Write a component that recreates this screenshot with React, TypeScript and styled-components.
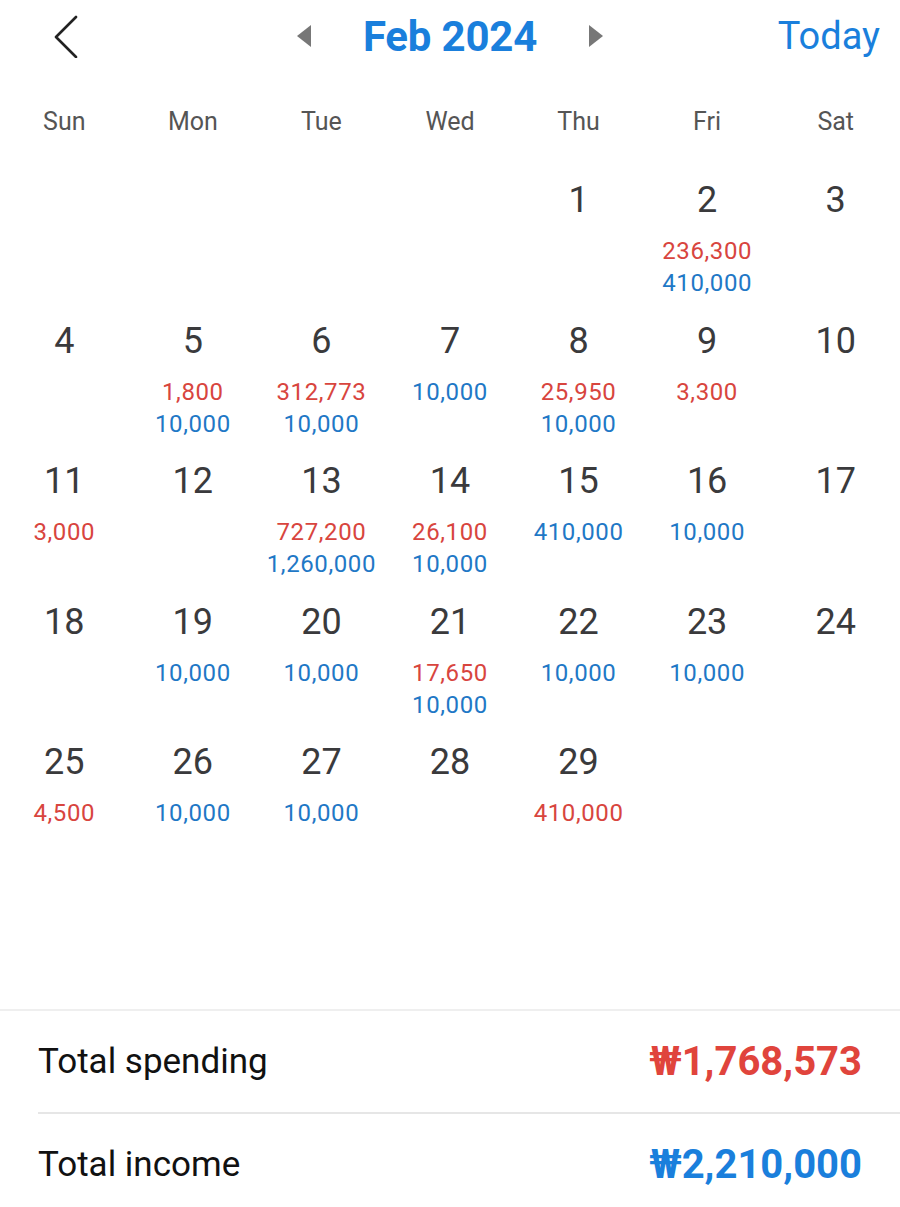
import React from 'react';
import styled, { createGlobalStyle } from 'styled-components';

const GlobalStyle = createGlobalStyle`
  html, body {
    margin: 0;
    padding: 0;
    background: #fff;
    overflow: hidden;
  }
  body {
    font-family: Roboto, "Noto Sans", "Liberation Sans", sans-serif;
  }
`;

const Page = styled.div`
  width: 900px;
  height: 1215px;
  display: flex;
  flex-direction: column;
`;

const TopBar = styled.div`
  height: 72px;
  display: grid;
  grid-template-columns: 200px 1fr 200px;
  align-items: center;
`;

const BackButton = styled.div`
  display: flex;
  align-items: center;
  padding-left: 52px;
`;

const MonthNav = styled.div`
  display: flex;
  align-items: center;
  justify-content: center;
  gap: 51px;
`;

const MonthTitle = styled.div`
  font-size: 42px;
  font-weight: 700;
  color: #1a7fdc;
  letter-spacing: -0.2px;
`;

const TodayLink = styled.div`
  font-size: 38px;
  color: #1a7fdc;
  text-align: right;
  padding-right: 20px;
`;

const WeekHeader = styled.div`
  display: grid;
  grid-template-columns: repeat(7, 1fr);
  height: 94px;
  align-items: center;
  padding-top: 4px;
  box-sizing: border-box;
`;

const WeekDay = styled.div`
  text-align: center;
  font-size: 25px;
  color: #555;
`;

const Grid = styled.div`
  display: grid;
  grid-template-columns: repeat(7, 1fr);
  grid-auto-rows: 140.5px;
`;

const Cell = styled.div`
  display: flex;
  flex-direction: column;
  align-items: center;
  padding-top: 14px;
`;

const DayNum = styled.div`
  font-size: 36px;
  line-height: 40px;
  color: #3a3a3c;
  margin-bottom: 15px;
`;

const Amount = styled.div<{ $kind: 'out' | 'in' }>`
  font-size: 24px;
  line-height: 32px;
  letter-spacing: 0.6px;
  color: ${(p) => (p.$kind === 'out' ? '#d8453e' : '#1f78c6')};
`;

const Footer = styled.div`
  margin-top: auto;
  border-top: 2px solid #efefef;
`;

const SumRow = styled.div<{ $divider?: boolean }>`
  height: 101px;
  margin-left: 38px;
  padding-right: 38px;
  display: flex;
  align-items: center;
  justify-content: space-between;
  border-bottom: ${(p) => (p.$divider ? '2px solid #e6e6e6' : 'none')};
`;

const SumLabel = styled.div`
  font-size: 35px;
  color: #111;
`;

const SumValue = styled.div<{ $kind: 'out' | 'in' }>`
  font-size: 40px;
  font-weight: 700;
  color: ${(p) => (p.$kind === 'out' ? '#e0443c' : '#1a7fdc')};
`;

type Day = { d: number; out?: string; inc?: string } | null;

const days: Day[] = [
  null, null, null, null,
  { d: 1 },
  { d: 2, out: '236,300', inc: '410,000' },
  { d: 3 },
  { d: 4 },
  { d: 5, out: '1,800', inc: '10,000' },
  { d: 6, out: '312,773', inc: '10,000' },
  { d: 7, inc: '10,000' },
  { d: 8, out: '25,950', inc: '10,000' },
  { d: 9, out: '3,300' },
  { d: 10 },
  { d: 11, out: '3,000' },
  { d: 12 },
  { d: 13, out: '727,200', inc: '1,260,000' },
  { d: 14, out: '26,100', inc: '10,000' },
  { d: 15, inc: '410,000' },
  { d: 16, inc: '10,000' },
  { d: 17 },
  { d: 18 },
  { d: 19, inc: '10,000' },
  { d: 20, inc: '10,000' },
  { d: 21, out: '17,650', inc: '10,000' },
  { d: 22, inc: '10,000' },
  { d: 23, inc: '10,000' },
  { d: 24 },
  { d: 25, out: '4,500' },
  { d: 26, inc: '10,000' },
  { d: 27, inc: '10,000' },
  { d: 28 },
  { d: 29, out: '410,000' },
];

const weekdays = ['Sun', 'Mon', 'Tue', 'Wed', 'Thu', 'Fri', 'Sat'];

const Triangle = ({ dir }: { dir: 'left' | 'right' }) => (
  <svg width="16" height="24" viewBox="0 0 16 24">
    {dir === 'left' ? (
      <polygon points="1,12 15,1 15,23" fill="#777" />
    ) : (
      <polygon points="15,12 1,1 1,23" fill="#777" />
    )}
  </svg>
);

export default function App() {
  return (
    <Page>
      <GlobalStyle />
      <TopBar>
        <BackButton>
          <svg width="26" height="44" viewBox="0 0 26 44">
            <polyline
              points="24,3 4,23 24,43"
              fill="none"
              stroke="#222"
              strokeWidth="2.6"
              strokeLinecap="round"
              strokeLinejoin="round"
            />
          </svg>
        </BackButton>
        <MonthNav>
          <Triangle dir="left" />
          <MonthTitle>Feb 2024</MonthTitle>
          <Triangle dir="right" />
        </MonthNav>
        <TodayLink>Today</TodayLink>
      </TopBar>
      <WeekHeader>
        {weekdays.map((w) => (
          <WeekDay key={w}>{w}</WeekDay>
        ))}
      </WeekHeader>
      <Grid>
        {days.map((day, i) =>
          day ? (
            <Cell key={i}>
              <DayNum>{day.d}</DayNum>
              {day.out && <Amount $kind="out">{day.out}</Amount>}
              {day.inc && <Amount $kind="in">{day.inc}</Amount>}
            </Cell>
          ) : (
            <Cell key={i} />
          )
        )}
      </Grid>
      <Footer>
        <SumRow $divider>
          <SumLabel>Total spending</SumLabel>
          <SumValue $kind="out">₩1,768,573</SumValue>
        </SumRow>
        <SumRow>
          <SumLabel>Total income</SumLabel>
          <SumValue $kind="in">₩2,210,000</SumValue>
        </SumRow>
      </Footer>
    </Page>
  );
}
